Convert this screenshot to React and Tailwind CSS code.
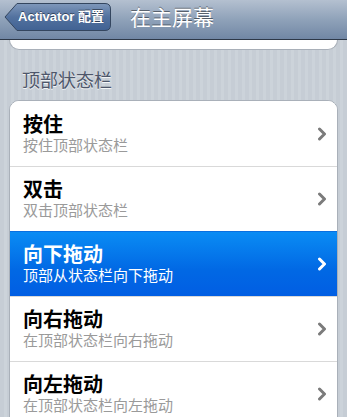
import React from "react";

const CJK = "font-['Helvetica_Neue','Liberation_Sans','Noto_Sans_CJK_SC',sans-serif]";

function Chevron({ color }) {
  return (
    <svg width="10" height="14" viewBox="0 0 10 14" className="shrink-0">
      <polyline points="2.5,2 7.5,7 2.5,12" fill="none" stroke={color} strokeWidth="3" strokeLinecap="round" strokeLinejoin="round" />
    </svg>
  );
}

function Row({ title, sub, selected, first }) {
  return (
    <div
      className={
        "flex h-[65px] items-center pl-[13px] pr-[10px] " +
        (first ? "" : "border-t border-[#d9d9d9] ") +
        (selected
          ? "bg-[linear-gradient(#0a8cf4,#0168e4_60%,#015ee3)] border-t-[#0a6fe0]"
          : "bg-white")
      }
    >
      <div className="flex flex-1 flex-col pt-[1px]">
        <div className={"text-[20px] leading-[22px] font-bold " + (selected ? "text-white" : "text-black")}>{title}</div>
        <div className={"text-[15px] leading-[19px] " + (selected ? "text-white" : "text-[#9a9a9a]")}>{sub}</div>
      </div>
      <Chevron color={selected ? "#ffffff" : "#7b7b7b"} />
    </div>
  );
}

export default function App() {
  const rows = [
    ["按住", "按住顶部状态栏"],
    ["双击", "双击顶部状态栏"],
    ["向下拖动", "顶部从状态栏向下拖动", true],
    ["向右拖动", "在顶部状态栏向右拖动"],
    ["向左拖动", "在顶部状态栏向左拖动"],
  ];
  return (
    <div className={"h-[417px] w-[347px] overflow-hidden bg-[repeating-linear-gradient(90deg,#c6cdd5_0px,#c6cdd5_4px,#ccd3da_4px,#ccd3da_7px)] " + CJK}>
      <div className="flex h-[40px] items-start gap-[18px] border-b border-[#2d3848] bg-[linear-gradient(#b4c0d0,#8fa2b9_50%,#7187a5)] pl-[4px] pt-[2px]">
        <div className="relative flex h-[30px] w-[108px] items-center justify-end pr-[8px]">
          <svg className="absolute inset-0" width="108" height="30" viewBox="0 0 108 30">
            <defs>
              <linearGradient id="bb" x1="0" y1="0" x2="0" y2="1">
                <stop offset="0" stopColor="#7f98bb" />
                <stop offset="0.5" stopColor="#53729f" />
                <stop offset="1" stopColor="#416293" />
              </linearGradient>
            </defs>
            <path d="M1 15 L13 1.5 L101 1.5 Q106.5 1.5 106.5 7 L106.5 23 Q106.5 28.5 101 28.5 L13 28.5 Z" fill="url(#bb)" stroke="#34465f" strokeWidth="1" />
          </svg>
          <span className="relative text-[13px] font-bold text-white [text-shadow:0_-1px_0_rgba(0,0,0,0.45)]">Activator 配置</span>
        </div>
        <div className="pt-[2px] text-[21px] leading-[28px] text-white [text-shadow:0_-1px_0_rgba(0,0,0,0.45)]">在主屏幕</div>
      </div>
      <div className="mx-[9px] h-[10px] rounded-b-[10px] border border-t-0 border-[#a9b0b9] bg-white" />
      <div className="mt-[20px] pl-[22px] text-[18px] leading-[22px] text-[#4d566a] [text-shadow:0_1px_0_rgba(255,255,255,0.8)]">顶部状态栏</div>
      <div className="mx-[9px] mt-[8px] overflow-hidden rounded-[10px] border border-[#a9b0b9] bg-white">
        {rows.map((r, i) => (
          <Row key={i} title={r[0]} sub={r[1]} selected={r[2]} first={i === 0} />
        ))}
      </div>
    </div>
  );
}
